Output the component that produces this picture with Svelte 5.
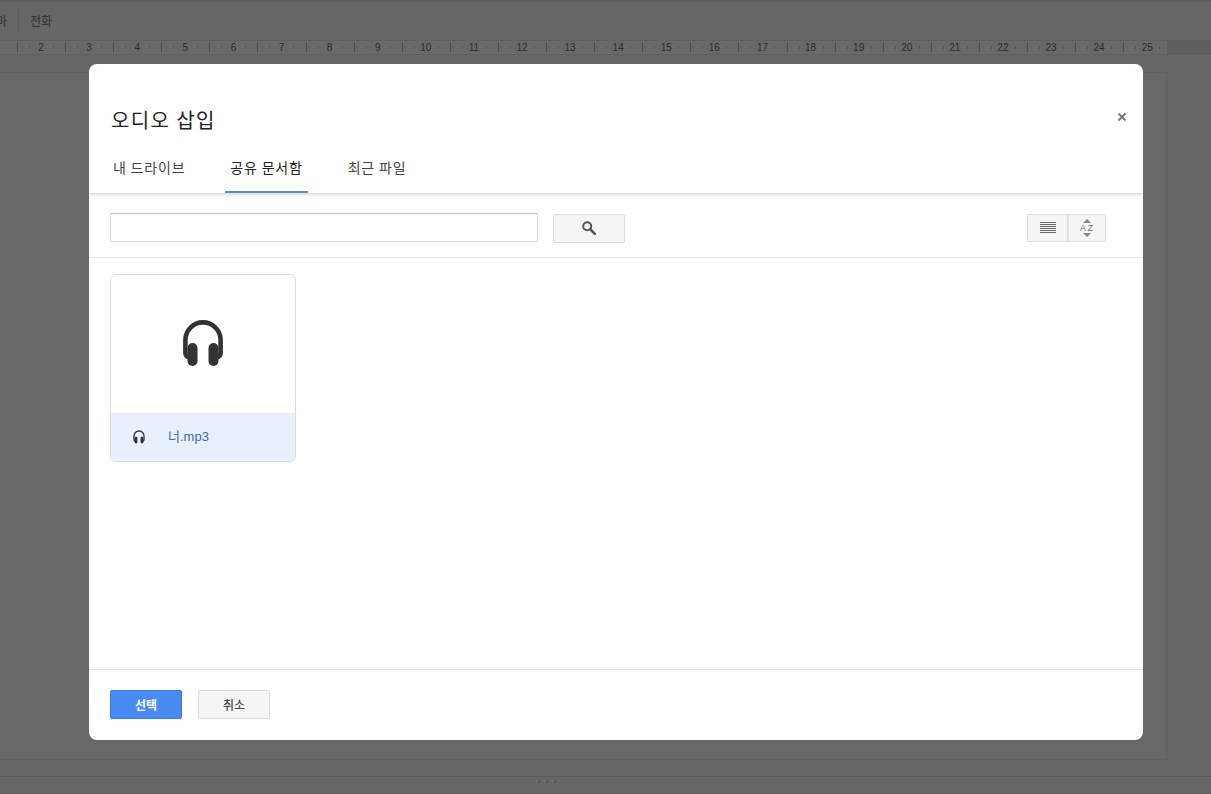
<script>
	const rulerMarks = Array.from({ length: 24 }, (_, i) => i + 2);
	const tabs = ['내 드라이브', '공유 문서함', '최근 파일'];
	let activeTab = $state(1);
</script>

{#snippet headset(size)}
	<svg class="headset" width={size} height={size * 48 / 42} viewBox="0 0 42 48">
		<path d="M3.4 21a17.6 17.6 0 0 1 35.2 0V34q0 3.5-4 4.5M3.4 21V34q0 3.5 4 4.5" fill="none" stroke="#333" stroke-width="4.6" stroke-linecap="round" />
		<rect x="5.5" y="24" width="10" height="23" rx="5" fill="#333" />
		<rect x="26.5" y="24" width="10" height="23" rx="5" fill="#333" />
	</svg>
{/snippet}

<div class="app">
	<div class="topline"></div>
	<div class="toolbar">
		<span class="tool-clipped">마</span>
		<span class="tool-sep"></span>
		<span class="tool-text">전화</span>
	</div>
	<div class="ruler">
		<div class="ruler-track">
			{#each rulerMarks as n}
				<div class="ruler-cell">
					<span class="tick"></span>
					<span class="num">{n}</span>
				</div>
			{/each}
		</div>
	</div>
	<div class="workspace">
		<div class="doc-page"></div>
	</div>
	<div class="statusbar">
		<div class="grip"><i></i><i></i><i></i></div>
	</div>

	<div class="dialog">
		<header class="dialog-head">
			<h1>오디오 삽입</h1>
			<svg class="close" width="10" height="10" viewBox="0 0 10 10" aria-label="닫기">
				<path d="M1.5 1.5l7 7M8.5 1.5l-7 7" stroke="#777" stroke-width="1.8" />
			</svg>
		</header>
		<nav class="tabs">
			{#each tabs as tab, i}
				<button class="tab" class:active={activeTab === i} onclick={() => (activeTab = i)}>{tab}</button>
			{/each}
		</nav>
		<div class="searchbar">
			<input class="search-input" type="text" />
			<button class="btn search-btn" aria-label="검색">
				<svg width="16" height="16" viewBox="0 0 16 16">
					<circle cx="6.2" cy="6.2" r="4" fill="none" stroke="#555" stroke-width="2" />
					<path d="M9.2 9.2l4.6 4.6" stroke="#555" stroke-width="2.6" stroke-linecap="round" />
				</svg>
			</button>
			<div class="view-btns">
				<button class="btn view-btn list" aria-label="목록">
					<svg width="16" height="12" viewBox="0 0 16 12">
						<path d="M0 .5h16M0 2.5h16M0 4.5h16M0 6.5h16M0 8.5h16M0 10.5h16" stroke="#666" stroke-width="1" />
					</svg>
				</button>
				<button class="btn view-btn sort">
					<svg width="8" height="4" viewBox="0 0 8 4"><path d="M4 0l4 4H0z" fill="#888" /></svg>
					<span>AZ</span>
					<svg width="8" height="4" viewBox="0 0 8 4"><path d="M4 4l4-4H0z" fill="#888" /></svg>
				</button>
			</div>
		</div>
		<div class="files">
			<div class="card">
				<div class="thumb">{@render headset(42)}</div>
				<div class="card-foot">
					<span class="foot-icon">{@render headset(12)}</span>
					<span class="file-name">너.mp3</span>
				</div>
			</div>
		</div>
		<footer class="dialog-foot">
			<button class="btn primary">선택</button>
			<button class="btn cancel">취소</button>
		</footer>
	</div>
</div>

<style>
	:global(body) {
		margin: 0;
		background: #666;
	}

	.app {
		position: relative;
		width: 1211px;
		height: 794px;
		overflow: hidden;
		display: flex;
		flex-direction: column;
		background: #666;
		font-family: 'Noto Sans CJK KR', 'Liberation Sans', sans-serif;
	}

	.topline {
		height: 2px;
		background: #5d5d5d;
		flex: none;
	}

	.toolbar {
		height: 38px;
		flex: none;
		display: flex;
		align-items: center;
		padding-bottom: 2px;
		box-sizing: border-box;
		color: #2e2e2e;
		font-size: 12px;
	}

	.tool-clipped {
		width: 7px;
		overflow: hidden;
		direction: rtl;
		margin-right: 11px;
	}

	.tool-sep {
		width: 1px;
		height: 24px;
		background: #5c5c5c;
		margin-right: 11px;
	}

	.ruler {
		height: 15px;
		flex: none;
		background: #5f5f5f;
		box-sizing: border-box;
	}

	.ruler-track {
		width: 1167px;
		height: 15px;
		background: #696969;
		display: flex;
		padding-left: 17px;
		box-sizing: border-box;
		overflow: hidden;
		border-top: 1px solid #616161;
		border-bottom: 1px solid #616161;
	}

	.ruler-cell {
		position: relative;
		flex: 0 0 48.1px;
		display: flex;
		justify-content: center;
		align-items: center;
		background-image: linear-gradient(#555, #555), linear-gradient(#555, #555);
		background-size: 1px 3px;
		background-position: 12px 5px, 36px 5px;
		background-repeat: no-repeat;
	}

	.tick {
		position: absolute;
		left: 0;
		top: 1px;
		width: 1px;
		height: 10px;
		background: #4f4f4f;
	}

	.num {
		font-family: 'Liberation Sans', sans-serif;
		font-size: 10px;
		line-height: 13px;
		color: #2b2b2b;
	}

	.workspace {
		flex: 1;
		min-height: 0;
		padding: 17px 44px 16px 0;
		border-bottom: 1px solid #5b5b5b;
	}

	.doc-page {
		height: 100%;
		box-sizing: border-box;
		background: #686868;
		border: 1px solid #616161;
		border-left: none;
	}

	.statusbar {
		height: 17px;
		flex: none;
		box-sizing: border-box;
		background: #676767;
		border-bottom: 1px solid #5f5f5f;
	}

	.grip {
		display: flex;
		gap: 5px;
		margin: 3px 0 0 538px;
	}

	.grip i {
		width: 3px;
		height: 3px;
		border-radius: 50%;
		background: #555;
	}

	.dialog {
		position: absolute;
		left: 89px;
		top: 64px;
		width: 1054px;
		height: 676px;
		background: #fff;
		border-radius: 8px;
		display: flex;
		flex-direction: column;
		overflow: hidden;
	}

	.dialog-head {
		height: 77px;
		flex: none;
		display: flex;
		align-items: flex-end;
		justify-content: space-between;
		padding: 0 16px 0 22px;
		box-sizing: border-box;
	}

	h1 {
		margin: 0;
		font-size: 20px;
		font-weight: 400;
		line-height: 30px;
		letter-spacing: 1.4px;
		color: #222;
		position: relative;
		top: -6px;
	}

	.close {
		position: relative;
		top: -19px;
	}

	.tabs {
		height: 52px;
		flex: none;
		display: flex;
		gap: 35px;
		padding-left: 19px;
		box-sizing: border-box;
		position: relative;
	}

	/* soft shadow under the tab strip, runs the full dialog width */
	.tabs::after {
		content: '';
		position: absolute;
		left: 0;
		right: 0;
		top: 100%;
		height: 4px;
		background: linear-gradient(rgba(0, 0, 0, 0.14), rgba(0, 0, 0, 0));
	}

	.tab {
		height: 52px;
		padding: 2px 5px 0;
		background: none;
		border: none;
		border-bottom: 2px solid transparent;
		font-family: inherit;
		font-size: 14px;
		letter-spacing: 0.8px;
		color: #444;
	}

	.tab.active {
		color: #222;
		border-bottom-color: #5a8ad0;
	}

	.searchbar {
		height: 65px;
		flex: none;
		display: flex;
		align-items: center;
		padding: 6px 37px 0 21px;
		box-sizing: border-box;
		border-bottom: 1px solid #e5e5e5;
	}

	.search-input {
		width: 428px;
		height: 29px;
		box-sizing: border-box;
		border: 1px solid #d9d9d9;
		border-top-color: #c0c0c0;
		margin: -1px 15px 0 0;
		padding: 0;
		outline: none;
	}

	.btn {
		box-sizing: border-box;
		height: 29px;
		padding: 0;
		border: 1px solid #dcdcdc;
		border-radius: 2px;
		background: #f5f5f5;
		font-family: inherit;
		display: flex;
		align-items: center;
		justify-content: center;
	}

	.search-btn {
		width: 72px;
	}

	.view-btns {
		margin-left: auto;
		display: flex;
	}

	.view-btn {
		height: 28px;
	}

	.list {
		width: 41px;
		border-radius: 2px 0 0 2px;
	}

	.sort {
		width: 38px;
		border-left: none;
		border-radius: 0 2px 2px 0;
		flex-direction: column;
		gap: 1px;
		box-shadow: inset 1px 0 0 #e4e4e4;
	}

	.sort span {
		font-family: 'Liberation Sans', sans-serif;
		font-size: 9px;
		line-height: 8px;
		letter-spacing: 1.5px;
		margin-right: -1.5px;
		color: #777;
	}

	.files {
		flex: 1;
		min-height: 0;
		padding: 16px 21px;
		box-sizing: border-box;
	}

	.card {
		width: 186px;
		height: 188px;
		box-sizing: border-box;
		border: 1px solid #dadce0;
		border-radius: 6px;
		overflow: hidden;
		display: flex;
		flex-direction: column;
	}

	.thumb {
		flex: 1;
		display: flex;
		align-items: center;
		justify-content: center;
		padding-bottom: 2px;
		box-sizing: border-box;
	}

	.headset {
		display: block;
	}

	.card-foot {
		height: 48px;
		flex: none;
		background: #e8f0fe;
		display: flex;
		align-items: center;
		padding-left: 22px;
	}

	.foot-icon {
		width: 35px;
		flex: none;
	}

	.file-name {
		font-family: 'Liberation Sans', 'Noto Sans CJK KR', sans-serif;
		font-size: 13px;
		line-height: 16px;
		color: #3f6a99;
	}

	.dialog-foot {
		height: 71px;
		flex: none;
		border-top: 1px solid #e5e5e5;
		box-sizing: border-box;
		display: flex;
		align-items: center;
		gap: 16px;
		padding: 0 21px 2px;
	}

	.primary,
	.cancel {
		width: 72px;
		font-size: 12px;
		font-weight: 700;
	}

	.primary {
		background: #4a8af4;
		border-color: #3b78e7;
		color: #fff;
	}

	.cancel {
		font-weight: 500;
		color: #444;
	}
</style>
